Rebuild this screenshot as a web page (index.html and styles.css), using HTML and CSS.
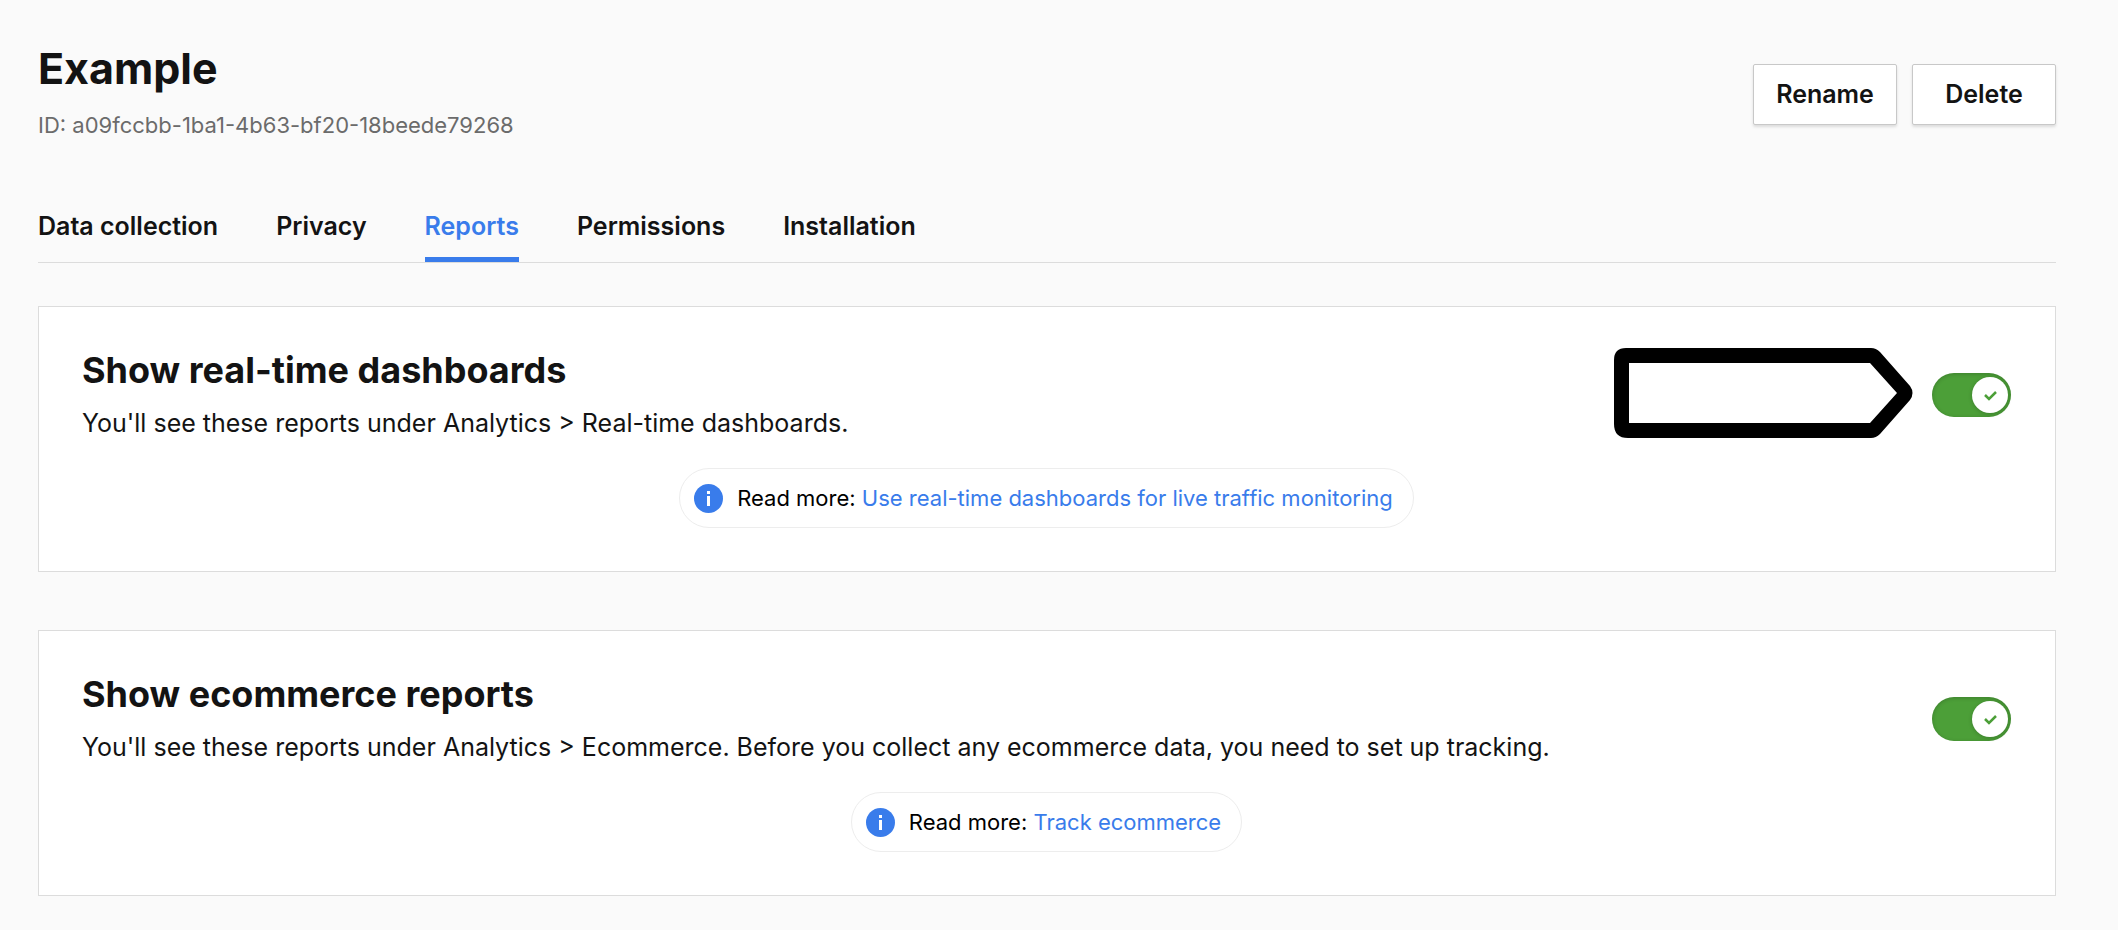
FILE: index.html
```html
<!DOCTYPE html>
<html lang="en">
  <head>
    <meta charset="utf-8">
    <title>Example</title>
    <link rel="stylesheet" href="styles.css">
  </head>
  <body>
    <header class="site-header">
      <div>
        <h1 class="site-name">Example</h1>
        <p class="site-id">ID: a09fccbb-1ba1-4b63-bf20-18beede79268</p>
      </div>
      <div class="actions">
        <button type="button" class="btn">Rename</button>
        <button type="button" class="btn">Delete</button>
      </div>
    </header>

    <nav class="tabs">
      <a href="#data-collection" class="tab">Data collection</a>
      <a href="#privacy" class="tab">Privacy</a>
      <a href="#reports" class="tab active" aria-current="page">Reports</a>
      <a href="#permissions" class="tab">Permissions</a>
      <a href="#installation" class="tab">Installation</a>
    </nav>

    <main class="cards">
      <section class="card">
        <div class="card-head">
          <div class="card-text">
            <h2><label for="realtime">Show real-time dashboards</label></h2>
            <p>You'll see these reports under Analytics &gt; Real-time dashboards.</p>
          </div>
          <svg class="pointer" width="299" height="93" viewBox="0 0 299 93" aria-hidden="true">
            <path fill-rule="evenodd" d="M12 0H257Q262 0 266 4L296 38Q301 45 296 52L266 86Q262 90 257 90H14Q0 90 0 76V12Q0 0 12 0ZM15 15V75H256L283 45L256 15Z"/>
          </svg>
          <span class="switch">
            <input type="checkbox" id="realtime" checked>
            <svg class="knob" viewBox="0 0 36 36" aria-hidden="true"><path d="M13 18l4 4 7-7"/></svg>
          </span>
        </div>
        <div class="read-more">
          <svg class="info" viewBox="0 0 29 29" aria-hidden="true">
            <circle cx="14.5" cy="14.5" r="14.5"/>
            <path d="M13 7h3v3h-3zM13 12h3v10h-3z"/>
          </svg>
          <span>Read more: <a href="#realtime-help">Use real-time dashboards for live traffic monitoring</a></span>
        </div>
      </section>

      <section class="card">
        <div class="card-head">
          <div class="card-text">
            <h2><label for="ecommerce">Show ecommerce reports</label></h2>
            <p>You'll see these reports under Analytics &gt; Ecommerce. Before you collect any ecommerce data, you need to set up tracking.</p>
          </div>
          <span class="switch">
            <input type="checkbox" id="ecommerce" checked>
            <svg class="knob" viewBox="0 0 36 36" aria-hidden="true"><path d="M13 18l4 4 7-7"/></svg>
          </span>
        </div>
        <div class="read-more">
          <svg class="info" viewBox="0 0 29 29" aria-hidden="true">
            <circle cx="14.5" cy="14.5" r="14.5"/>
            <path d="M13 7h3v3h-3zM13 12h3v10h-3z"/>
          </svg>
          <span>Read more: <a href="#ecommerce-help">Track ecommerce</a></span>
        </div>
      </section>
    </main>
  </body>
</html>
```

FILE: styles.css
```css
* {
  box-sizing: border-box;
}
body {
  margin: 0;
  padding: 46px 62px 32px 38px;
  background-color: #fafafa;
  color: #131313;
  font-family: Inter, "Liberation Sans", sans-serif;
  font-size: 25px;
}
h1,
h2,
p {
  margin: 0;
}
a {
  color: #397ceb;
  text-decoration: none;
}
.site-header {
  display: flex;
  justify-content: space-between;
  align-items: center;
}
.site-name {
  font-size: 43px;
  line-height: 44px;
  font-weight: 700;
}
.site-id {
  margin-top: 17px;
  font-size: 22px;
  line-height: 36px;
  color: #6b6b6b;
}
.actions {
  display: flex;
  gap: 15px;
}
.btn {
  min-width: 144px;
  padding: 13px 16px;
  background-color: white;
  border: 1px solid #c8c8c8;
  border-radius: 2px;
  box-shadow: 0 2px 3px rgba(0, 0, 0, 0.12);
  color: inherit;
  font-family: inherit;
  font-size: 25px;
  line-height: 33px;
  font-weight: 600;
}

.tabs {
  display: flex;
  gap: 58px;
  margin-top: 67px;
  border-bottom: 1px solid #dcdcdc;
}
.tab {
  padding-bottom: 15px;
  border-bottom: 5px solid transparent;
  color: #131313;
  line-height: 32px;
  font-weight: 600;
}
.tab.active {
  color: #397ceb;
  border-bottom-color: #397ceb;
}

.cards {
  display: flex;
  flex-direction: column;
  gap: 58px;
  margin-top: 43px;
}
.card {
  padding: 41px 44px 43px 43px;
  background-color: white;
  border: 1px solid #dcdcdc;
}
.card-head {
  display: flex;
  align-items: center;
  gap: 19px;
}
.card-text {
  flex: 1;
}
.card-text h2 {
  font-size: 36px;
  line-height: 44px;
  font-weight: 700;
}
.card-text p {
  margin-top: 13px;
  line-height: 36px;
}

.switch {
  position: relative;
  width: 79px;
  height: 44px;
}
.switch input {
  appearance: none;
  display: block;
  width: 100%;
  height: 100%;
  margin: 0;
  border-radius: 22px;
  background-color: #4c9f38;
  box-shadow: inset 0 1px 4px rgba(0, 0, 0, 0.2);
}
/* white disc with the tick, sits over the checkbox */
.knob {
  position: absolute;
  top: 4px;
  right: 3px;
  width: 36px;
  height: 36px;
  border-radius: 50%;
  background-color: white;
  box-shadow: 0 1px 4px rgba(0, 0, 0, 0.2);
  pointer-events: none;
}
.knob path {
  fill: none;
  stroke: #4c9f38;
  stroke-width: 2.5;
}

.read-more {
  display: flex;
  align-items: center;
  gap: 14px;
  width: fit-content;
  margin: 27px auto 0;
  padding: 14px 20px 14px 14px;
  border: 1px solid #ededed;
  border-radius: 30px;
  color: black;
  font-size: 22px;
  line-height: 30px;
}
.info {
  width: 29px;
  height: 29px;
}
.info circle {
  fill: #397ceb;
}
.info path {
  fill: white;
}
```
